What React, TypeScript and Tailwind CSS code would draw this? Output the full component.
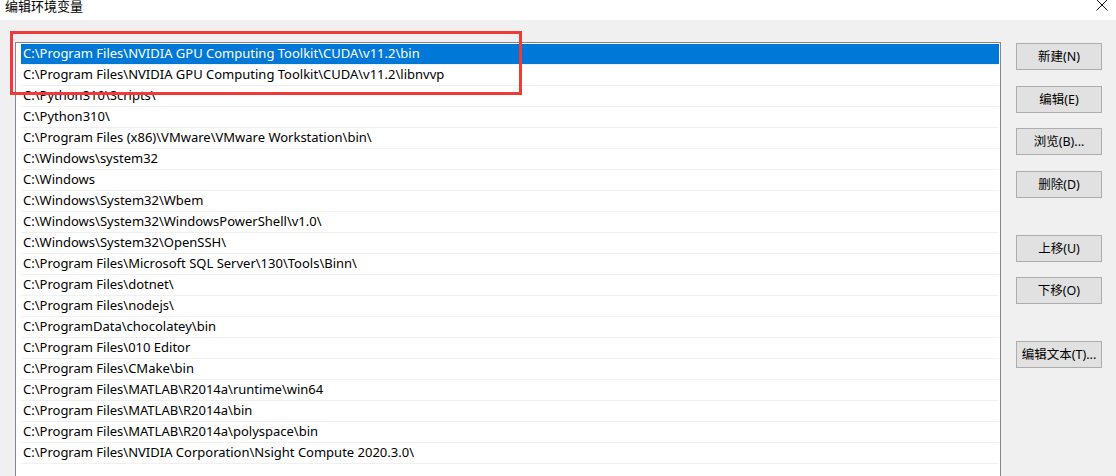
const paths = [
  "C:\\Program Files\\NVIDIA GPU Computing Toolkit\\CUDA\\v11.2\\bin",
  "C:\\Program Files\\NVIDIA GPU Computing Toolkit\\CUDA\\v11.2\\libnvvp",
  "C:\\Python310\\Scripts\\",
  "C:\\Python310\\",
  "C:\\Program Files (x86)\\VMware\\VMware Workstation\\bin\\",
  "C:\\Windows\\system32",
  "C:\\Windows",
  "C:\\Windows\\System32\\Wbem",
  "C:\\Windows\\System32\\WindowsPowerShell\\v1.0\\",
  "C:\\Windows\\System32\\OpenSSH\\",
  "C:\\Program Files\\Microsoft SQL Server\\130\\Tools\\Binn\\",
  "C:\\Program Files\\dotnet\\",
  "C:\\Program Files\\nodejs\\",
  "C:\\ProgramData\\chocolatey\\bin",
  "C:\\Program Files\\010 Editor",
  "C:\\Program Files\\CMake\\bin",
  "C:\\Program Files\\MATLAB\\R2014a\\runtime\\win64",
  "C:\\Program Files\\MATLAB\\R2014a\\bin",
  "C:\\Program Files\\MATLAB\\R2014a\\polyspace\\bin",
  "C:\\Program Files\\NVIDIA Corporation\\Nsight Compute 2020.3.0\\",
  "",
];

const buttons = [
  { label: "新建(N)", mt: "mt-0" },
  { label: "编辑(E)", mt: "mt-[16px]" },
  { label: "浏览(B)...", mt: "mt-[15px]" },
  { label: "删除(D)", mt: "mt-[16px]" },
  { label: "上移(U)", mt: "mt-[37px]" },
  { label: "下移(O)", mt: "mt-[15px]" },
  { label: "编辑文本(T)...", mt: "mt-[37px]" },
];

export default function App() {
  return (
    <div className="w-[1116px] h-[476px] overflow-hidden flex flex-col bg-[#f0f0f0] text-black font-['Noto_Sans','Noto_Sans_CJK_SC',sans-serif]">
      {/* title bar */}
      <div className="h-[20px] shrink-0 bg-white flex justify-between">
        <span className="pl-[5px] -mt-[4px] text-[13px] leading-[20px]">编辑环境变量</span>
        <svg className="mr-[8px]" width="12" height="11" viewBox="0 0 12 11">
          <path d="M0.5 -0.5 L11.5 10.5 M11.5 -0.5 L0.5 10.5" stroke="#111" strokeWidth="1" />
        </svg>
      </div>

      <div className="flex-1 flex pt-[22px] relative">
        <div className="ml-[15px] w-[986px] border border-b-0 border-[#828790] bg-white pt-px">
          {paths.map((p, i) => (
            <div key={i} className="pl-[5px] pr-px">
              <div
                className={
                  "h-[21px] border-b border-[#f0f0f0] pl-[2px] text-[13px] leading-[19px] whitespace-nowrap " +
                  (i === 0 ? "bg-[#0078d7] text-white" : "")
                }
              >
                {p}
              </div>
            </div>
          ))}
        </div>

        <div className="ml-[15px] pt-[1px] flex flex-col">
          {buttons.map((b) => (
            <button
              key={b.label}
              className={
                "w-[86px] h-[27px] border border-[#adadad] bg-[#e1e1e1] text-[12.5px] leading-none pt-px " + b.mt
              }
            >
              {b.label}
            </button>
          ))}
        </div>

        {/* red highlight */}
        <div className="absolute left-[10px] top-[11px] w-[512px] h-[64px] border-[3px] border-[#f03a3a]" />
      </div>
    </div>
  );
}
